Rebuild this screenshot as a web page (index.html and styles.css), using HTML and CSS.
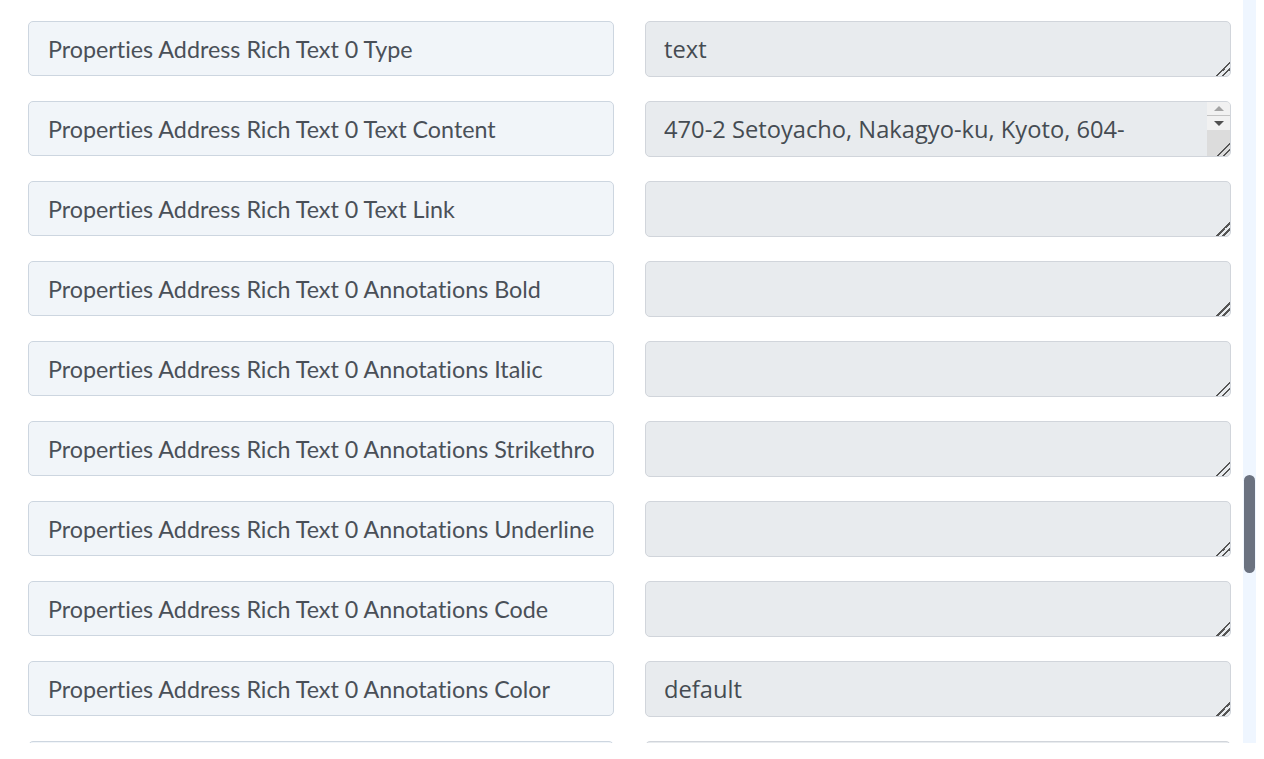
FILE: index.html
```html
<!DOCTYPE html>
<html lang="en">
<head>
  <meta charset="UTF-8">
  <title>Field Mapping</title>
  <link rel="stylesheet" href="styles.css">
</head>
<body>

  <div class="panel">
    <div class="mapping">
      <input class="field-label" value="Properties Address Rich Text 0 Type" readonly>
      <textarea class="field-value" rows="1" disabled>text</textarea>

      <input class="field-label" value="Properties Address Rich Text 0 Text Content" readonly>
      <div class="value-wrap">
        <textarea class="field-value field-value--long" rows="1" disabled>470-2 Setoyacho, Nakagyo-ku, Kyoto, 604-8214, Japan</textarea>
        <div class="mini-scroll">
          <span class="mini-btn mini-btn--up"></span>
          <span class="mini-btn mini-btn--down"></span>
          <span class="mini-grip"></span>
        </div>
      </div>

      <input class="field-label" value="Properties Address Rich Text 0 Text Link" readonly>
      <textarea class="field-value" rows="1" disabled></textarea>

      <input class="field-label" value="Properties Address Rich Text 0 Annotations Bold" readonly>
      <textarea class="field-value" rows="1" disabled></textarea>

      <input class="field-label" value="Properties Address Rich Text 0 Annotations Italic" readonly>
      <textarea class="field-value" rows="1" disabled></textarea>

      <input class="field-label" value="Properties Address Rich Text 0 Annotations Strikethrough" readonly>
      <textarea class="field-value" rows="1" disabled></textarea>

      <input class="field-label" value="Properties Address Rich Text 0 Annotations Underline" readonly>
      <textarea class="field-value" rows="1" disabled></textarea>

      <input class="field-label" value="Properties Address Rich Text 0 Annotations Code" readonly>
      <textarea class="field-value" rows="1" disabled></textarea>

      <input class="field-label" value="Properties Address Rich Text 0 Annotations Color" readonly>
      <textarea class="field-value" rows="1" disabled>default</textarea>

      <input class="field-label" value="Properties Address Rich Text 0 Plain Text" readonly>
      <textarea class="field-value" rows="1" disabled></textarea>
    </div>

    <div class="scroll-track">
      <div class="scroll-thumb"></div>
    </div>
  </div>

</body>
</html>
```

FILE: styles.css
```css
html, body {
  margin: 0;
  padding: 0;
  background: white;
  font-family: Lato, "Open Sans", sans-serif;
}

.panel {
  display: flex;
  width: 1256px;
  height: 743px;
  overflow: hidden;
}

.mapping {
  flex: 1;
  display: grid;
  grid-template-columns: 1fr 1fr;
  grid-auto-rows: 56px;
  column-gap: 31px;
  row-gap: 24px;
  padding: 21px 12px 0 28px;
  overflow: hidden;
}

.field-label {
  box-sizing: border-box;
  width: 100%;
  height: 55px;
  margin: 0;
  padding: 0 19px;
  background: #f1f5f9;
  border: 1px solid #cdd6e0;
  border-radius: 5px;
  color: #4a5058;
  font-family: Lato, "Open Sans", sans-serif;
  font-size: 23.3px;
  font-variant-ligatures: none;
  outline: none;
}

.value-wrap {
  position: relative;
}

.field-value {
  display: block;
  box-sizing: border-box;
  width: 100%;
  height: 56px;
  margin: 0;
  padding: 7px 18px 9px;
  background: #e8ebee;
  border: 1px solid #d1d5db;
  border-radius: 5px;
  color: #454b52;
  font-family: "Open Sans", sans-serif;
  font-size: 23.7px;
  line-height: 40px;
  overflow: hidden;
  resize: vertical;
}

.field-value--long {
  padding-right: 58px;
}

.field-value::-webkit-resizer {
  background:
    linear-gradient(135deg, transparent 52%, #555 52%, #555 60%, transparent 60%, transparent 72%, #555 72%, #555 80%, transparent 80%);
}

/* scroll arrows for a value longer than one line */
.mini-scroll {
  position: absolute;
  top: 1px;
  right: 1px;
  bottom: 1px;
  width: 23px;
  display: flex;
  flex-direction: column;
  background: #dcdcdc;
  border-radius: 0 4px 4px 0;
  overflow: hidden;
  pointer-events: none;
}

.mini-btn {
  display: flex;
  align-items: center;
  justify-content: center;
  background: #f1f1f1;
}

.mini-btn--up {
  height: 13px;
  border-bottom: 1px solid #c4c4c4;
}

.mini-btn--down {
  height: 14px;
}

.mini-btn--up::before {
  content: "";
  border-left: 5px solid transparent;
  border-right: 5px solid transparent;
  border-bottom: 5px solid #a3a3a3;
}

.mini-btn--down::before {
  content: "";
  border-left: 5px solid transparent;
  border-right: 5px solid transparent;
  border-top: 5px solid #505050;
}

.mini-grip {
  margin: auto 0 0 auto;
  width: 14px;
  height: 14px;
  background:
    linear-gradient(135deg, transparent 52%, #555 52%, #555 60%, transparent 60%, transparent 72%, #555 72%, #555 80%, transparent 80%);
}

.scroll-track {
  width: 13px;
  background: #eff6ff;
}

.scroll-thumb {
  width: 11px;
  height: 98px;
  margin: 475px 0 0 1px;
  background: #6b7280;
  border-radius: 6px;
}
```
